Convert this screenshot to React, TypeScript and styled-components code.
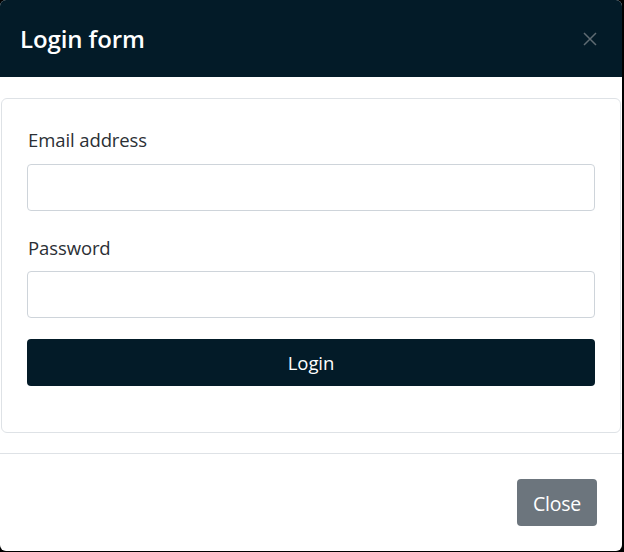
import React from "react";
import styled, { createGlobalStyle } from "styled-components";

const Global = createGlobalStyle`
  html, body { margin: 0; padding: 0; background: #000; }
  body { font-family: "Open Sans", "Noto Sans", sans-serif; color: #212529; }
  * { box-sizing: border-box; }
`;

const Modal = styled.div`
  width: 622px;
  height: 551px;
  background: #fff;
  border-radius: 6px;
  overflow: hidden;
  display: flex;
  flex-direction: column;
`;

const Header = styled.div`
  height: 77px;
  background: #031b28;
  display: flex;
  align-items: center;
  justify-content: space-between;
  padding: 0 24px 0 20px;
`;

const Title = styled.h1`
  margin: 0;
  font-size: 24px;
  font-weight: 600;
  color: #fff;
  line-height: 1;
  letter-spacing: -0.1px;
`;

const CloseX = styled.button`
  width: 16px;
  height: 16px;
  padding: 0;
  border: 0;
  background: transparent;
  display: flex;
  align-items: center;
  justify-content: center;
  cursor: pointer;
`;

const Body = styled.div`
  padding: 21px 1px 20px 1px;
  border-bottom: 1px solid #dee2e6;
`;

const Card = styled.form`
  border: 1px solid #dee2e6;
  border-radius: 6px;
  padding: 27px 25px 46px 25px;
  display: flex;
  flex-direction: column;
`;

const Label = styled.label<{ $mb: number }>`
  font-size: 18.5px;
  line-height: 27px;
  color: #2b3035;
  margin: 0 0 ${(p) => p.$mb}px 1px;
  letter-spacing: -0.1px;
`;

const Input = styled.input<{ $mb: number }>`
  height: 47px;
  width: 100%;
  border: 1px solid #ced4da;
  border-radius: 4px;
  margin-bottom: ${(p) => p.$mb}px;
  font-size: 18px;
  padding: 0 12px;
  outline: none;
`;

const PrimaryButton = styled.button`
  height: 47px;
  width: 100%;
  border: 0;
  border-radius: 4px;
  background: #031b28;
  color: #fff;
  font-family: inherit;
  font-size: 18.5px;
  letter-spacing: -0.1px;
`;

const Footer = styled.div`
  flex: 1;
  display: flex;
  justify-content: flex-end;
  align-items: flex-start;
  padding: 25px 25px 0 0;
`;

const SecondaryButton = styled.button`
  height: 47px;
  width: 80px;
  border: 0;
  border-radius: 4px;
  background: #6c757d;
  color: #fff;
  font-family: inherit;
  font-size: 19.5px;
  letter-spacing: -0.2px;
  padding: 2px 0 0;
`;

export default function App() {
  return (
    <>
      <Global />
      <Modal>
        <Header>
          <Title>Login form</Title>
          <CloseX aria-label="Close">
            <svg width="14" height="14" viewBox="0 0 14 14">
              <path d="M1 1L13 13M13 1L1 13" stroke="#5f6b72" strokeWidth="1.5" />
            </svg>
          </CloseX>
        </Header>
        <Body>
          <Card onSubmit={(e) => e.preventDefault()}>
            <Label $mb={11}>Email address</Label>
            <Input $mb={23} type="email" />
            <Label $mb={10}>Password</Label>
            <Input $mb={21} type="password" />
            <PrimaryButton type="submit">Login</PrimaryButton>
          </Card>
        </Body>
        <Footer>
          <SecondaryButton>Close</SecondaryButton>
        </Footer>
      </Modal>
    </>
  );
}
